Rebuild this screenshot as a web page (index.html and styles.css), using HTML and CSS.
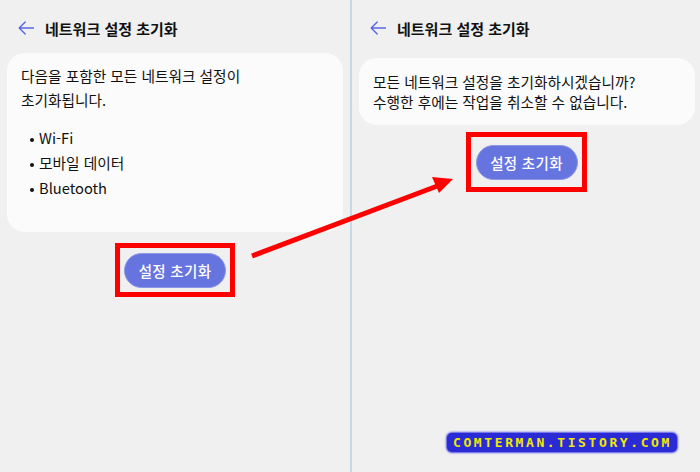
FILE: index.html
```html
<!DOCTYPE html>
<html lang="ko">
    <head>
        <meta charset="UTF-8" />
        <meta name="viewport" content="width=device-width, initial-scale=1.0" />
        <title>네트워크 설정 초기화</title>
        <link rel="stylesheet" href="styles.css">
    </head>
    <body>
        <div class="screens">
            <div class="panel panelLeft">
                <div class="header">
                    <svg class="back" width="16" height="14" viewBox="0 0 16 14">
                        <path d="M15.5 7H1.2M7.2 1L1.2 7l6 6" fill="none" stroke="#5465e0" stroke-width="1.3" stroke-linecap="round" stroke-linejoin="round"/>
                    </svg>
                    <span class="title">네트워크 설정 초기화</span>
                </div>
                <div class="card cardLeft">
                    <p class="lead">다음을 포함한 모든 네트워크 설정이<br>초기화됩니다.</p>
                    <ul class="items">
                        <li>Wi-Fi</li>
                        <li>모바일 데이터</li>
                        <li>Bluetooth</li>
                    </ul>
                </div>
                <div class="actions actionsLeft">
                    <div class="mark">
                        <button class="resetBtn">설정 초기화</button>
                    </div>
                </div>
            </div>
            <div class="divider"></div>
            <div class="panel panelRight">
                <div class="header">
                    <svg class="back" width="16" height="14" viewBox="0 0 16 14">
                        <path d="M15.5 7H1.2M7.2 1L1.2 7l6 6" fill="none" stroke="#5465e0" stroke-width="1.3" stroke-linecap="round" stroke-linejoin="round"/>
                    </svg>
                    <span class="title">네트워크 설정 초기화</span>
                </div>
                <div class="card cardRight">
                    <p class="confirm">모든 네트워크 설정을 초기화하시겠습니까?<br>수행한 후에는 작업을 취소할 수 없습니다.</p>
                </div>
                <div class="actions actionsRight">
                    <div class="mark markTall">
                        <button class="resetBtn">설정 초기화</button>
                    </div>
                </div>
            </div>
        </div>

        <!-- annotation arrow drawn over both screens -->
        <svg class="pointer" width="700" height="472" viewBox="0 0 700 472">
            <line x1="252" y1="256" x2="440" y2="185" stroke="#ff0000" stroke-width="5"/>
            <polygon points="453,179 432,177 439,193" fill="#ff0000"/>
        </svg>

        <div class="watermark">COMTERMAN.TISTORY.COM</div>
    </body>
</html>
```

FILE: styles.css
```css
* {
    box-sizing: border-box;
}
body {
    margin: 0;
    background-color: #f0f0f0;
    font-family: "Noto Sans CJK KR", "Noto Sans", sans-serif;
    color: #111;
    width: 700px;
    height: 472px;
    overflow: hidden;
    position: relative;
}
.screens {
    display: flex;
    height: 472px;
}
.panel {
    display: flex;
    flex-direction: column;
}
.panelLeft {
    width: 350px;
}
.panelRight {
    width: 348px;
}
.divider {
    width: 2px;
    background-color: #c9d8e6;
}
.header {
    display: flex;
    align-items: center;
    height: 56px;
    padding-left: 18px;
    gap: 11px;
}
.back {
    flex: none;
}
.title {
    font-size: 15px;
    font-weight: 700;
}
.card {
    background-color: #fbfbfb;
    border-radius: 18px;
    font-size: 14.7px;
}
.cardLeft {
    margin: -3px 7px 0 7px;
    padding: 11px 14px 32px 14px;
    line-height: 24px;
}
.cardRight {
    margin: 2px 5px 0 7px;
    padding: 14px 14px 13px 14px;
    line-height: 20px;
}
.lead,
.confirm {
    margin: 0;
}
.items {
    list-style: none;
    margin: 13px 0 0 0;
    padding: 0;
}
.items li {
    line-height: 25px;
    padding-left: 18px;
    position: relative;
}
.items li::before {
    content: "";
    position: absolute;
    left: 9px;
    top: 13px;
    width: 4px;
    height: 4px;
    border-radius: 50%;
    background-color: #111;
}
.actions {
    display: flex;
    justify-content: center;
}
.actionsLeft {
    margin-top: 11px;
}
.actionsRight {
    margin-top: 7px;
}
.mark {
    border: 5px solid #ff0000;
    padding: 5px 4px 4px 4px;
}
.markTall {
    padding: 8px 4px 7px 5px;
}
.resetBtn {
    display: block;
    width: 102px;
    height: 35px;
    border-radius: 18px;
    border: 1px solid #8c97ea;
    background-color: #6574df;
    color: #fff;
    font-family: "Noto Sans CJK KR", sans-serif;
    font-size: 14.5px;
    font-weight: 500;
    letter-spacing: 0.3px;
    padding: 0;
}
.pointer {
    position: absolute;
    left: 0;
    top: 0;
    pointer-events: none;
}
.watermark {
    position: absolute;
    left: 447px;
    top: 433px;
    height: 19px;
    padding: 0 5px 0 6px;
    background-color: #2b2bd6;
    border-radius: 5px;
    box-shadow: 0 0 2px 1px #5050e8;
    color: #f0e800;
    font-family: "DejaVu Sans Mono", monospace;
    font-weight: 700;
    font-size: 13px;
    line-height: 19px;
    letter-spacing: 2.6px;
    white-space: nowrap;
}
```
